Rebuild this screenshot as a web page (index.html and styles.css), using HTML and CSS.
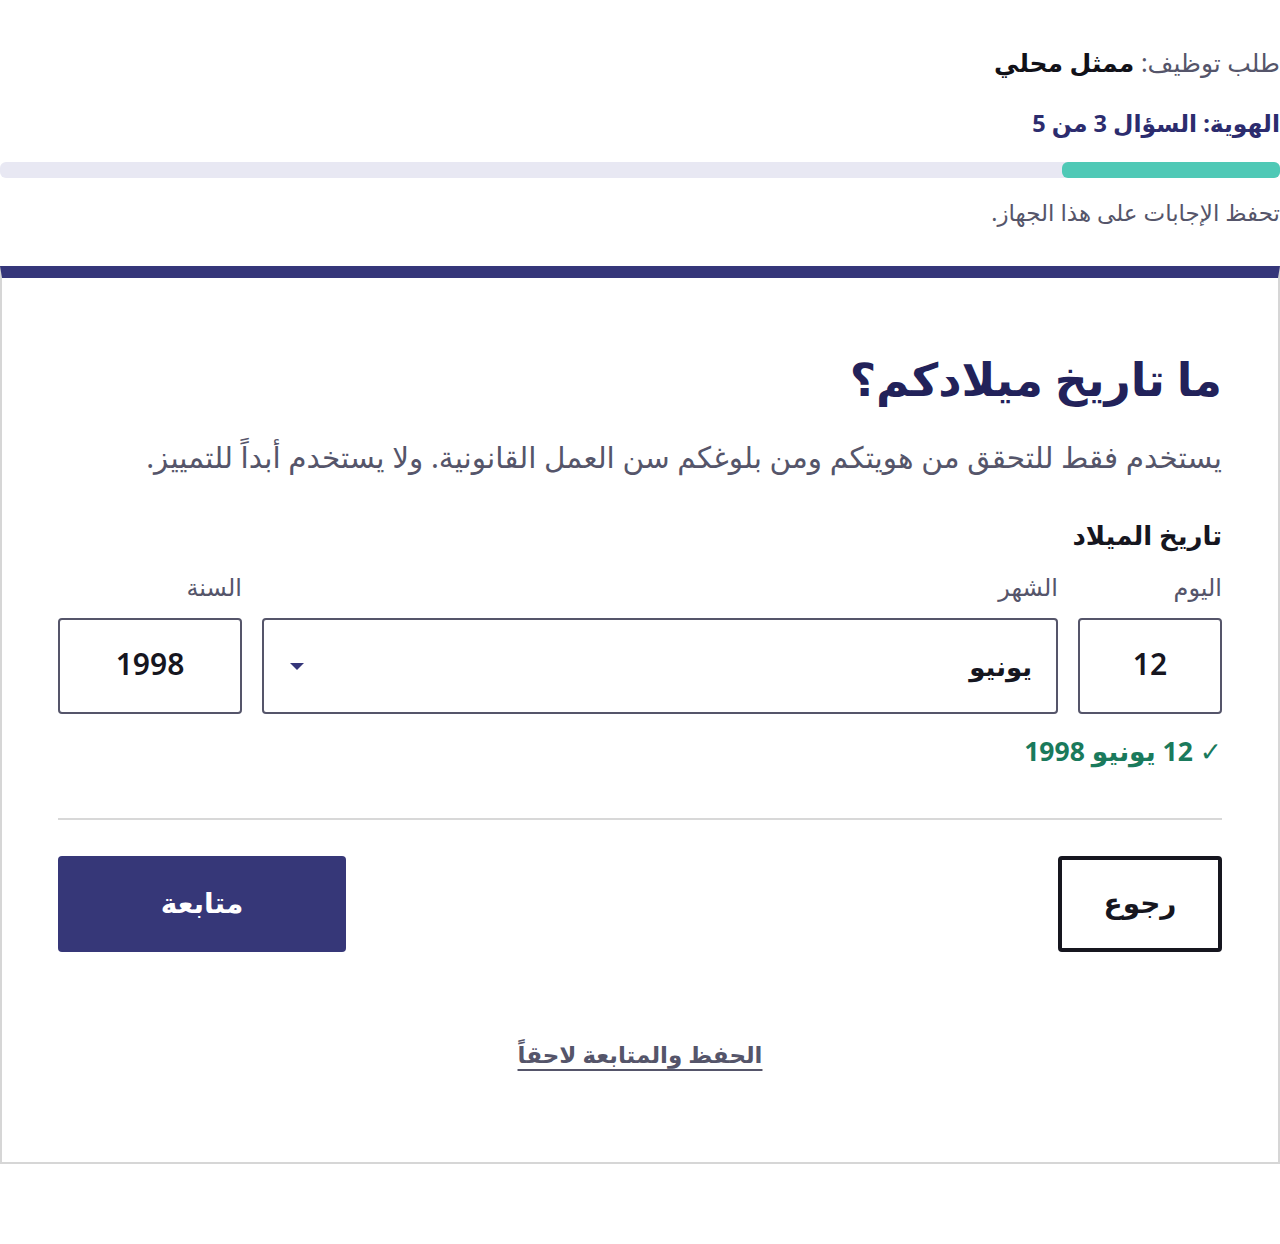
FILE: index.html
```html
<!DOCTYPE html>
<html lang="ar" dir="rtl">
<head>
<meta charset="utf-8">
<title>تاريخ الميلاد</title>
<link rel="stylesheet" href="styles.css">
</head>
<body>
<header class="top">
  <p class="job"><span class="job-label">طلب توظيف:</span> <strong class="job-name">ممثل محلي</strong></p>
  <p class="step">الهوية: السؤال 3 من 5</p>
  <div class="progress"><div class="progress-fill" style="width:17%"></div></div>
  <p class="saved">تحفظ الإجابات على هذا الجهاز.</p>
</header>
<main class="card">
  <h1 class="title">ما تاريخ ميلادكم؟</h1>
  <p class="lead">يستخدم فقط للتحقق من هويتكم ومن بلوغكم سن العمل القانونية. ولا يستخدم أبداً للتمييز.</p>
  <fieldset class="dob">
    <legend class="dob-legend">تاريخ الميلاد</legend>
    <div class="fields">
      <div class="field field-day">
        <label class="field-label">اليوم</label>
        <div class="input input-center">12</div>
      </div>
      <div class="field field-month">
        <label class="field-label">الشهر</label>
        <div class="input input-select"><span class="month-value">يونيو</span><span class="caret"></span></div>
      </div>
      <div class="field field-year">
        <label class="field-label">السنة</label>
        <div class="input input-center">1998</div>
      </div>
    </div>
    <p class="ok">✓ 12 يونيو 1998</p>
  </fieldset>
  <hr class="sep">
  <div class="actions">
    <button class="btn btn-back">رجوع</button>
    <button class="btn btn-next">متابعة</button>
  </div>
  <div class="later"><a class="later-link" href="#">الحفظ والمتابعة لاحقاً</a></div>
</main>
</body>
</html>
```
FILE: styles.css
```css
html, body {
  margin: 0;
  padding: 0;
  background: #ffffff;
}
body {
  font-family: "Noto Sans", "DejaVu Sans", sans-serif;
  color: #1b1b2b;
}
p { margin: 0; }

.top {
  padding-top: 44px;
}
.job {
  font-size: 25px;
  line-height: 36px;
  color: #55556a;
}
.job-name {
  color: #111118;
  font-weight: 700;
}
.step {
  margin-top: 25px;
  font-size: 23.5px;
  line-height: 36px;
  font-weight: 700;
  color: #2c2c6e;
}
.progress {
  margin-top: 21px;
  height: 16px;
  background: #e8e8f3;
  border-radius: 6px;
  display: flex;
}
.progress-fill {
  height: 100%;
  background: #4fc9b6;
  border-radius: 6px;
}
.saved {
  margin-top: 16px;
  font-size: 23px;
  line-height: 36px;
  color: #55556a;
}

.card {
  margin-top: 36px;
  border: 2px solid #d6d6d6;
  border-top: 12px solid #35367a;
  padding: 70px 56px 87px;
}
.title {
  margin: 0;
  font-size: 45.5px;
  line-height: 60px;
  font-weight: 700;
  color: #22225a;
}
.lead {
  margin-top: 29px;
  font-size: 29.5px;
  line-height: 40px;
  color: #55556a;
}
.dob {
  margin: 40px 0 0;
  padding: 0;
  border: 0;
}
.dob-legend {
  padding: 0;
  font-size: 26px;
  line-height: 36px;
  font-weight: 700;
  color: #16161f;
}
.fields {
  margin-top: 18px;
  display: flex;
  gap: 20px;
}
.field {
  display: flex;
  flex-direction: column;
  gap: 15px;
}
.field-day { width: 144px; }
.field-month { flex: 1; }
.field-year { width: 184px; }
.field-label {
  font-size: 24px;
  line-height: 32px;
  color: #55556a;
}
.input {
  box-sizing: border-box;
  height: 96px;
  border: 2px solid #55556a;
  border-radius: 4px;
  font-size: 30px;
  font-weight: 600;
  color: #16161f;
  display: flex;
  align-items: center;
  padding-bottom: 6px;
}
.input-center {
  justify-content: center;
}
.input-select {
  justify-content: space-between;
  padding: 0 24px 0 26px;
}
.month-value {
  font-size: 26px;
  font-weight: 700;
}
.caret {
  width: 0;
  height: 0;
  border-left: 7px solid transparent;
  border-right: 7px solid transparent;
  border-top: 7px solid #35367a;
}
.ok {
  margin-top: 21px;
  font-size: 26.5px;
  line-height: 32px;
  font-weight: 700;
  color: #1a7a5c;
}
.sep {
  margin: 51px 0 0;
  border: 0;
  height: 2px;
  background: #d8d8d8;
}
.actions {
  margin-top: 36px;
  display: flex;
  justify-content: space-between;
}
.btn {
  box-sizing: border-box;
  height: 96px;
  border-radius: 4px;
  font-family: inherit;
  font-size: 28px;
  font-weight: 700;
  cursor: pointer;
  padding-bottom: 6px;
}
.btn-back {
  width: 164px;
  background: #ffffff;
  border: 4px solid #16161f;
  color: #16161f;
}
.btn-next {
  width: 288px;
  background: #363778;
  border: 0;
  color: #ffffff;
}
.later {
  margin-top: 84px;
  text-align: center;
  line-height: 36px;
}
.later-link {
  font-size: 23px;
  font-weight: 700;
  color: #55556a;
  text-decoration: underline;
  text-underline-offset: 6px;
}
```
